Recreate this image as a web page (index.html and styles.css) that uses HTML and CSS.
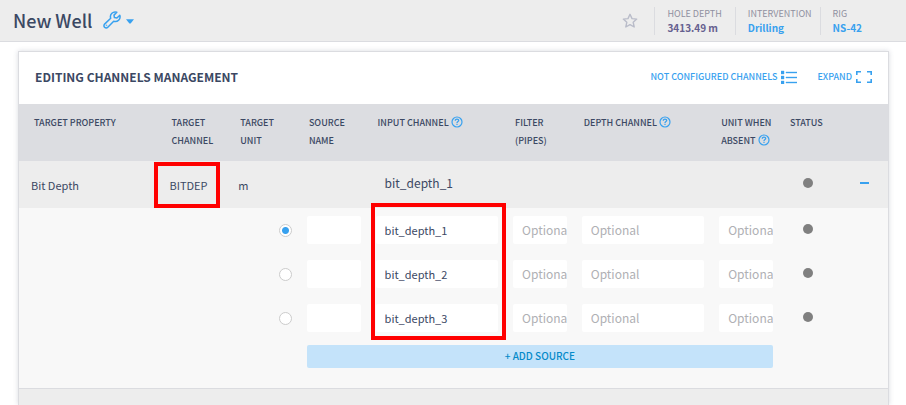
FILE: index.html
```html
<!DOCTYPE html>
<html lang="en">
<head>
<meta charset="utf-8">
<title>New Well</title>
<link rel="stylesheet" href="styles.css">
</head>
<body>
<svg class="defs" aria-hidden="true">
  <symbol id="help" viewBox="0 0 12 12">
    <circle cx="6" cy="6" r="5" fill="none" stroke="currentColor" stroke-width="1.2"/>
    <path d="M4.3 4.8C4.3 3.7 5 3.2 6 3.2S7.7 3.8 7.7 4.6C7.7 5.6 6 5.6 6 6.9" fill="none" stroke="currentColor" stroke-width="1.3"/>
    <path d="M5.4 7.8h1.2v1.2H5.4z" fill="currentColor"/>
  </symbol>
</svg>
<header class="topbar">
  <h1 class="title">New Well</h1>
  <button class="tools" aria-label="Well tools">
    <svg width="18" height="18" viewBox="0 0 18 18" fill="none" stroke="currentColor" stroke-width="1.5" stroke-linejoin="round"><path d="M13.8 1.3A4.7 4.7 0 0 0 7.7 7.2L1.6 13.1A2.2 2.2 0 0 0 4.8 16.3L10.7 10.2A4.7 4.7 0 0 0 16.8 4.3L13.9 7L11.4 6.6L11 4.1Z"/><circle cx="3.5" cy="14.3" r=".4" stroke-width=".8"/></svg>
    <svg class="caret" width="8" height="5" viewBox="0 0 8 5"><path d="M0 .3h8L4.6 4.5H3.4z" fill="currentColor"/></svg>
  </button>
  <button class="star" aria-label="Favorite">
    <svg width="16" height="16" viewBox="0 0 16 16" fill="none" stroke="currentColor" stroke-width="1.4" stroke-linejoin="round"><path d="M8 1.3L10 5.6L14.7 6.1L11.2 9.3L12.2 14L8 11.6L3.8 14L4.8 9.3L1.3 6.1L6 5.6Z"/></svg>
  </button>
  <dl class="facts">
    <div class="fact"><dt>HOLE DEPTH</dt><dd class="depth">3413.49 m</dd></div>
    <div class="fact"><dt>INTERVENTION</dt><dd><a href="#">Drilling</a></dd></div>
    <div class="fact"><dt>RIG</dt><dd><a href="#">NS-42</a></dd></div>
  </dl>
</header>
<main class="panel">
  <div class="panel-head">
    <h2>EDITING CHANNELS MANAGEMENT</h2>
    <button class="action">NOT CONFIGURED CHANNELS
      <svg width="16" height="14" viewBox="0 0 16 14" fill="currentColor"><path d="M0 1h3v3H0zM0 6h3v3H0zM0 11h3v3H0zM5 2h11v1H5zM5 7h11v1H5zM5 12h11v1H5z" stroke="currentColor" stroke-width=".4"/></svg>
    </button>
    <button class="action">EXPAND
      <svg width="16" height="12" viewBox="0 0 16 12" fill="none" stroke="currentColor" stroke-width="1.6"><path d="M5 .8H.8V4M.8 8v3.2H5M11 .8h4.2V4M15.2 8v3.2H11"/></svg>
    </button>
  </div>
  <table class="channels">
    <colgroup><col class="c-property"><col class="c-one"><col class="c-one"><col class="c-one"><col class="c-two"><col class="c-one"><col class="c-two"><col class="c-one"><col class="c-one"><col class="c-toggle"></colgroup>
    <thead>
      <tr>
        <th class="first">TARGET PROPERTY</th><th>TARGET<br>CHANNEL</th><th>TARGET<br>UNIT</th><th>SOURCE<br>NAME</th>
        <th>INPUT CHANNEL <svg class="help"><use href="#help"/></svg></th><th>FILTER<br>(PIPES)</th>
        <th>DEPTH CHANNEL <svg class="help"><use href="#help"/></svg></th><th>UNIT WHEN<br>ABSENT <svg class="help"><use href="#help"/></svg></th><th>STATUS</th><th></th>
      </tr>
    </thead>
    <tbody>
      <tr class="summary">
        <td class="property">Bit Depth</td><td class="marked">BITDEP<span class="mark mark-target"></span></td><td>m</td><td></td>
        <td class="current" colspan="4">bit_depth_1</td><td class="status"><span class="dot"></span></td>
        <td class="collapse"><button class="toggle" aria-label="Collapse"></button></td>
      </tr>
      <tr class="source">
        <td colspan="2"></td><td class="pick"><input type="radio" name="source" aria-label="Use source 1" checked></td>
        <td><input class="field" type="text" aria-label="Source name 1"></td>
        <td class="marked"><input class="field" type="text" aria-label="Input channel 1" value="bit_depth_1"><span class="mark mark-inputs"></span></td>
        <td><input class="field" type="text" aria-label="Filter 1" placeholder="Optional"></td>
        <td><input class="field" type="text" aria-label="Depth channel 1" placeholder="Optional"></td>
        <td><input class="field" type="text" aria-label="Unit when absent 1" placeholder="Optional"></td>
        <td class="status"><span class="dot"></span></td><td></td>
      </tr>
      <tr class="source">
        <td colspan="2"></td><td class="pick"><input type="radio" name="source" aria-label="Use source 2"></td>
        <td><input class="field" type="text" aria-label="Source name 2"></td>
        <td><input class="field" type="text" aria-label="Input channel 2" value="bit_depth_2"></td>
        <td><input class="field" type="text" aria-label="Filter 2" placeholder="Optional"></td>
        <td><input class="field" type="text" aria-label="Depth channel 2" placeholder="Optional"></td>
        <td><input class="field" type="text" aria-label="Unit when absent 2" placeholder="Optional"></td>
        <td class="status"><span class="dot"></span></td><td></td>
      </tr>
      <tr class="source">
        <td colspan="2"></td><td class="pick"><input type="radio" name="source" aria-label="Use source 3"></td>
        <td><input class="field" type="text" aria-label="Source name 3"></td>
        <td><input class="field" type="text" aria-label="Input channel 3" value="bit_depth_3"></td>
        <td><input class="field" type="text" aria-label="Filter 3" placeholder="Optional"></td>
        <td><input class="field" type="text" aria-label="Depth channel 3" placeholder="Optional"></td>
        <td><input class="field" type="text" aria-label="Unit when absent 3" placeholder="Optional"></td>
        <td class="status"><span class="dot"></span></td><td></td>
      </tr>
      <tr class="add">
        <td colspan="3"></td><td colspan="5"><button class="add-source">+ ADD SOURCE</button></td><td colspan="2"></td>
      </tr>
      <tr class="next"><td colspan="10"></td></tr>
    </tbody>
  </table>
</main>
</body>
</html>
```
FILE: styles.css
```css
* { box-sizing: border-box; }

body {
  margin: 0;
  background: #fff;
  color: #3b4863;
  font: 11px/18px "Noto Sans CJK SC", "Open Sans", sans-serif;
}

.defs { position: absolute; width: 0; height: 0; }

button {
  margin: 0;
  padding: 0;
  border: 0;
  background: none;
  color: #38a1ef;
  font: inherit;
  cursor: pointer;
}

a { color: #38a1ef; text-decoration: none; }
h1, h2, dl, dt, dd { margin: 0; }
svg { display: block; }

.topbar {
  display: flex;
  align-items: center;
  height: 42px;
  padding: 0 44px 0 13px;
  background: #ededed;
  border-bottom: 1px solid #dbdce0;
}

.title { padding-bottom: 2px; font-size: 18px; line-height: 24px; font-weight: 500; }
.tools { display: flex; align-items: center; gap: 5px; margin-left: 11px; padding-bottom: 2px; }
.caret { margin-top: 4px; }
.star { margin-left: auto; margin-right: 16px; color: #b9bcc9; }

.facts { display: flex; }
.fact { padding: 0 8px 0 12px; border-left: 1px solid #dbdce0; line-height: 14px; }
.fact:first-child { padding-right: 13px; }
.fact:last-child { padding-right: 0; }
.fact dt { color: #9090a0; font-size: 9px; }
.fact dd { font-size: 10px; font-weight: 700; }
.fact .depth { color: #65608f; }

.panel {
  margin: 9px 17px 0 18px;
  border: 1px solid #dbdce0;
  border-bottom: 0;
  box-shadow: 0 0 5px rgba(60, 70, 100, .2);
}

.panel-head {
  display: flex;
  align-items: center;
  gap: 20px;
  height: 52px;
  padding: 0 16px 2px;
}

.panel-head h2 { margin-right: auto; font-size: 12px; font-weight: 700; }
.action { display: flex; align-items: center; gap: 4px; font-size: 9px; font-weight: 500; }

.channels { width: 100%; table-layout: fixed; border-collapse: collapse; }
.c-property { width: 17.3%; }
.c-one { width: 7.9%; }
.c-two { width: 15.8%; }
.c-toggle { width: 3.6%; }

th, td { padding: 0; text-align: left; }
th { height: 57px; padding: 10px 0 11px 2px; background: #dcdde1; font-size: 9px; font-weight: 500; vertical-align: top; white-space: nowrap; }
th.first { padding-left: 15px; }
.help { display: inline-block; width: 12px; height: 12px; color: #38a1ef; vertical-align: -2px; }

.summary { height: 47px; background: #ededed; }
.summary .property { padding-left: 12px; }
.summary .current { padding: 0 0 4px 9px; font-size: 12px; }
.dot { display: block; width: 10px; height: 10px; border-radius: 50%; background: #808080; }
.status { padding: 0 0 4px 15px; }
.source .status { padding-bottom: 2px; }
.collapse { padding-bottom: 4px; }
.toggle { display: block; width: 9px; height: 2px; margin-left: 3px; background: #38a1ef; }

.source, .add { background: #f8f8f8; }
.source { height: 44px; }
.source td { line-height: 0; }

.field {
  display: block;
  width: calc(100% - 15px);
  height: 28px;
  padding: 0 0 0 9px;
  border: 0;
  border-radius: 2px;
  background: #fff;
  color: #3b4863;
  font: 11px/18px "Noto Sans CJK SC", "Open Sans", sans-serif;
}

.field::placeholder { color: #afb0b4; font-size: 12px; opacity: 1; }

.pick input {
  display: block;
  appearance: none;
  width: 13px;
  height: 13px;
  margin: 0 15px 0 auto;
  border: 1px solid #cccccc;
  border-radius: 50%;
  background: #fff;
}

.pick input:checked { background: radial-gradient(circle, #38a1ef 3px, #fff 4px); }

.add td { padding: 5px 0 20px; }
.add-source {
  display: block;
  width: calc(100% - 15px);
  height: 23px;
  padding-bottom: 2px;
  border-radius: 2px;
  background: #c4e3fa;
  color: #058ac9;
  font-size: 10px;
  font-weight: 500;
}

.next { height: 16px; background: #ededed; border-top: 1px solid #dbdce0; }

.marked { position: relative; }
.mark { position: absolute; border: 4px solid #f00; pointer-events: none; }
.mark-target { inset: 1px 18px 0 -15px; }
.mark-inputs { top: -5px; left: -5px; right: 7px; height: 137px; }
```
